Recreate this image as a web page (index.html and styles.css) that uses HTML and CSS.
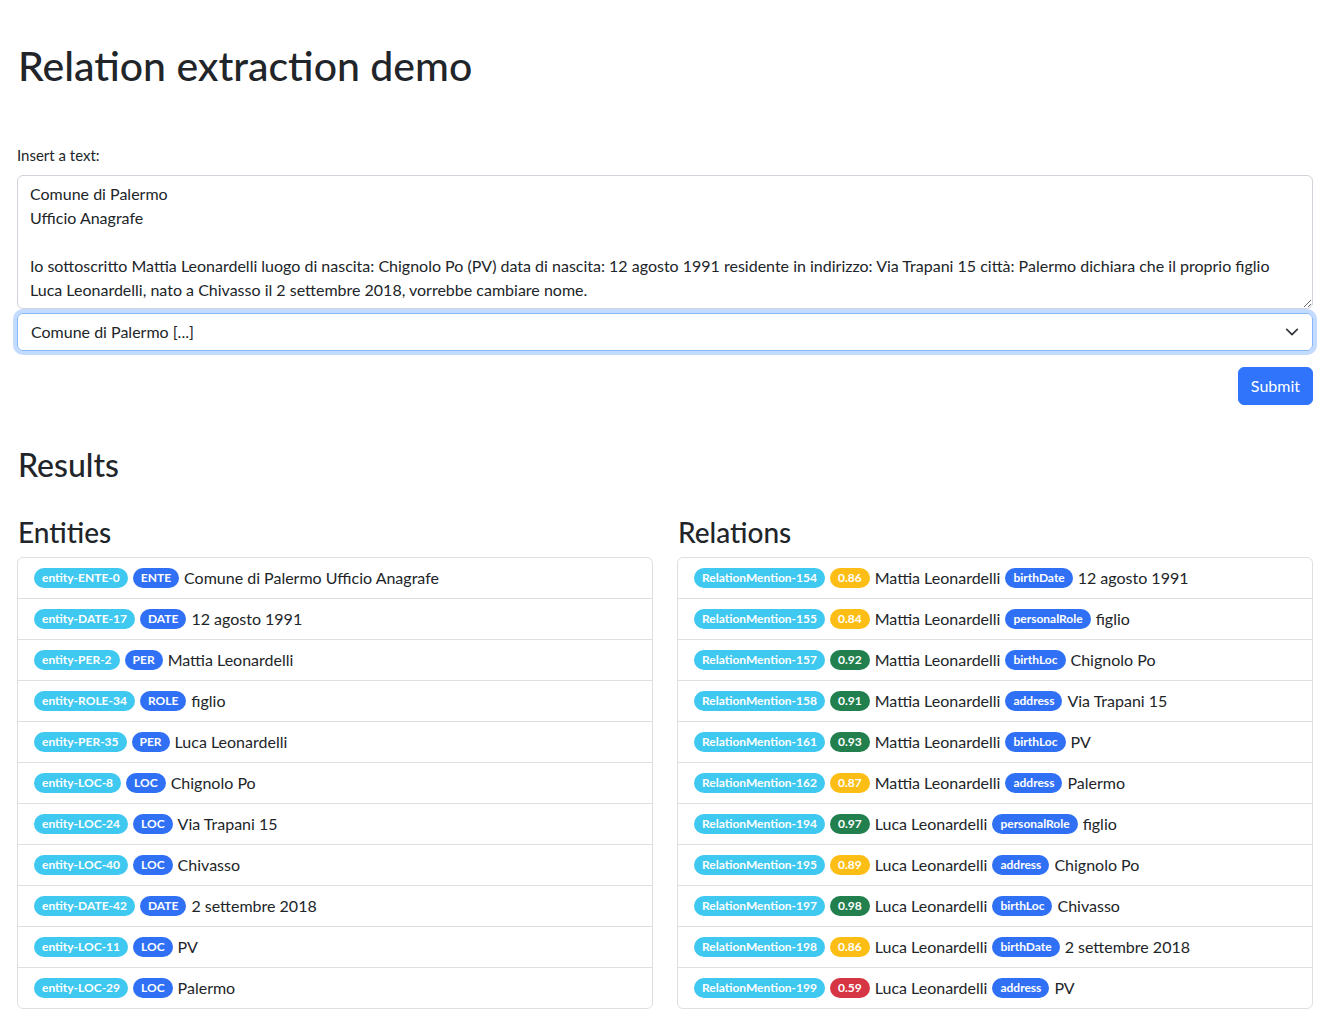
FILE: index.html
```html
<!DOCTYPE html>
<html lang="it">
<head>
<meta charset="utf-8">
<title>Relation extraction demo</title>
<link rel="stylesheet" href="styles.css">
</head>
<body>
<div class="page">
  <h1 class="title">Relation extraction demo</h1>
  <form class="form">
    <label class="label" for="txt">Insert a text:</label>
    <textarea id="txt" class="control textarea" rows="5">Comune di Palermo
Ufficio Anagrafe

Io sottoscritto Mattia Leonardelli luogo di nascita: Chignolo Po (PV) data di nascita: 12 agosto 1991 residente in indirizzo: Via Trapani 15 città: Palermo dichiara che il proprio figlio Luca Leonardelli, nato a Chivasso il 2 settembre 2018, vorrebbe cambiare nome.</textarea>
    <div class="select">
      <span>Comune di Palermo [...]</span>
      <svg class="chev" width="16" height="16" viewBox="0 0 16 16"><path d="M2 5l6 6 6-6" fill="none" stroke="#343a40" stroke-width="2" stroke-linecap="round" stroke-linejoin="round"/></svg>
    </div>
    <div class="actions"><button type="button" class="btn">Submit</button></div>
  </form>

  <h2 class="results">Results</h2>
  <div class="cols">
    <section class="col">
      <h3 class="sub">Entities</h3>
      <ul class="list">
        <li class="item"><span class="badge info">entity-ENTE-0</span><span class="badge primary">ENTE</span><span>Comune di Palermo Ufficio Anagrafe</span></li>
        <li class="item"><span class="badge info">entity-DATE-17</span><span class="badge primary">DATE</span><span>12 agosto 1991</span></li>
        <li class="item"><span class="badge info">entity-PER-2</span><span class="badge primary">PER</span><span>Mattia Leonardelli</span></li>
        <li class="item"><span class="badge info">entity-ROLE-34</span><span class="badge primary">ROLE</span><span>figlio</span></li>
        <li class="item"><span class="badge info">entity-PER-35</span><span class="badge primary">PER</span><span>Luca Leonardelli</span></li>
        <li class="item"><span class="badge info">entity-LOC-8</span><span class="badge primary">LOC</span><span>Chignolo Po</span></li>
        <li class="item"><span class="badge info">entity-LOC-24</span><span class="badge primary">LOC</span><span>Via Trapani 15</span></li>
        <li class="item"><span class="badge info">entity-LOC-40</span><span class="badge primary">LOC</span><span>Chivasso</span></li>
        <li class="item"><span class="badge info">entity-DATE-42</span><span class="badge primary">DATE</span><span>2 settembre 2018</span></li>
        <li class="item"><span class="badge info">entity-LOC-11</span><span class="badge primary">LOC</span><span>PV</span></li>
        <li class="item"><span class="badge info">entity-LOC-29</span><span class="badge primary">LOC</span><span>Palermo</span></li>
      </ul>
    </section>
    <section class="col">
      <h3 class="sub">Relations</h3>
      <ul class="list">
        <li class="item"><span class="badge info">RelationMention-154</span><span class="badge warning">0.86</span><span>Mattia Leonardelli</span><span class="badge primary">birthDate</span><span>12 agosto 1991</span></li>
        <li class="item"><span class="badge info">RelationMention-155</span><span class="badge warning">0.84</span><span>Mattia Leonardelli</span><span class="badge primary">personalRole</span><span>figlio</span></li>
        <li class="item"><span class="badge info">RelationMention-157</span><span class="badge success">0.92</span><span>Mattia Leonardelli</span><span class="badge primary">birthLoc</span><span>Chignolo Po</span></li>
        <li class="item"><span class="badge info">RelationMention-158</span><span class="badge success">0.91</span><span>Mattia Leonardelli</span><span class="badge primary">address</span><span>Via Trapani 15</span></li>
        <li class="item"><span class="badge info">RelationMention-161</span><span class="badge success">0.93</span><span>Mattia Leonardelli</span><span class="badge primary">birthLoc</span><span>PV</span></li>
        <li class="item"><span class="badge info">RelationMention-162</span><span class="badge warning">0.87</span><span>Mattia Leonardelli</span><span class="badge primary">address</span><span>Palermo</span></li>
        <li class="item"><span class="badge info">RelationMention-194</span><span class="badge success">0.97</span><span>Luca Leonardelli</span><span class="badge primary">personalRole</span><span>figlio</span></li>
        <li class="item"><span class="badge info">RelationMention-195</span><span class="badge warning">0.89</span><span>Luca Leonardelli</span><span class="badge primary">address</span><span>Chignolo Po</span></li>
        <li class="item"><span class="badge info">RelationMention-197</span><span class="badge success">0.98</span><span>Luca Leonardelli</span><span class="badge primary">birthLoc</span><span>Chivasso</span></li>
        <li class="item"><span class="badge info">RelationMention-198</span><span class="badge warning">0.86</span><span>Luca Leonardelli</span><span class="badge primary">birthDate</span><span>2 settembre 2018</span></li>
        <li class="item"><span class="badge info">RelationMention-199</span><span class="badge danger">0.59</span><span>Luca Leonardelli</span><span class="badge primary">address</span><span>PV</span></li>
      </ul>
    </section>
  </div>
</div>
</body>
</html>
```
FILE: styles.css
```css
* { box-sizing: border-box; }
html, body { margin: 0; padding: 0; background: #fff; }
body {
  font-family: Lato, "Noto Sans", "Liberation Sans", sans-serif;
  font-size: 16px;
  line-height: 1.5;
  color: #212529;
}
.page { padding: 42px 29px 24px 17px; }
.title {
  margin: 0 0 0 1px;
  font-size: 41px;
  font-weight: 500;
  line-height: 48px;
}
.form { margin-top: 53px; }
.label { display: block; font-size: 15px; line-height: 24px; margin-bottom: 8px; }
.control {
  display: block;
  width: 100%;
  border: 1px solid #ced4da;
  border-radius: 6px;
  background: #fff;
  color: #212529;
  font-family: inherit;
  font-size: 16px;
  line-height: 24px;
  padding: 6px 12px;
}
.textarea { resize: vertical; height: 134px; }
.select {
  margin-top: 4px;
  height: 38px;
  display: flex;
  align-items: center;
  justify-content: space-between;
  border: 1px solid #86b7fe;
  border-radius: 6px;
  padding: 6px 13px 6px 13px;
  box-shadow: 0 0 0 4px rgba(13,110,253,.25);
}
.chev { width: 14px; height: 14px; }
.actions { display: flex; justify-content: flex-end; margin-top: 16px; }
.btn {
  height: 38px;
  padding: 6px 12px;
  border: 1px solid #2f74fb;
  background: #2f74fb;
  color: #fff;
  border-radius: 6px;
  font-family: inherit;
  font-size: 16px;
  line-height: 24px;
}
.results {
  margin: 41px 0 0 1px;
  font-size: 32px;
  font-weight: 500;
  line-height: 38px;
}
.cols {
  display: grid;
  grid-template-columns: 1fr 1fr;
  column-gap: 24px;
  margin-top: 31px;
}
.sub {
  margin: 0 0 8px 1px;
  font-size: 28px;
  font-weight: 500;
  line-height: 34px;
}
.list {
  list-style: none;
  margin: 0;
  padding: 0;
  border: 1px solid rgba(0,0,0,.125);
  border-radius: 6px;
}
.item {
  display: flex;
  align-items: center;
  gap: 5px;
  padding: 8px 16px;
  line-height: 24px;
  border-top: 1px solid rgba(0,0,0,.125);
  white-space: nowrap;
}
.item:first-child { border-top: 0; }
.badge {
  display: inline-block;
  padding: 4px 8px;
  font-size: 12px;
  font-weight: 700;
  line-height: 12px;
  color: #fff;
  border-radius: 10px;
}
.info { background: #3fc8f0; }
.primary { background: #2f70f5; }
.warning { background: #fcbe14; }
.success { background: #22804f; }
.danger { background: #d63543; }
```
